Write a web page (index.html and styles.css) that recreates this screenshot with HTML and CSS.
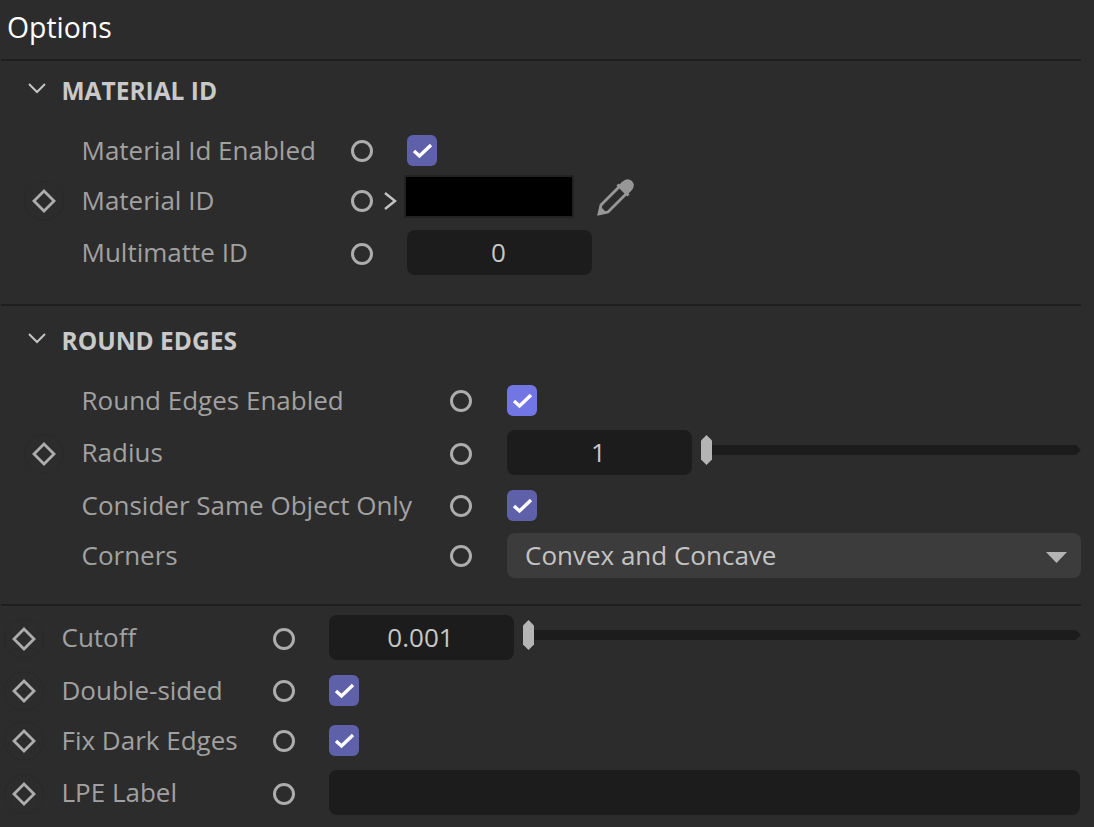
FILE: index.html
```html
<!DOCTYPE html>
<html lang="en">
<head>
<meta charset="utf-8">
<title>Options</title>
<link rel="stylesheet" href="styles.css">
</head>
<body>
<svg class="defs" width="0" height="0" aria-hidden="true">
  <defs>
    <symbol id="chev" viewBox="0 0 20 12"><path d="M2 2 L10 10 L18 2" fill="none" stroke="currentColor" stroke-width="2"/></symbol>
    <symbol id="tick" viewBox="0 0 30 30"><path d="M7 16 L12.500 21 L24 10" fill="none" stroke="#fff" stroke-width="3.400"/></symbol>
    <symbol id="diamond" viewBox="0 0 24 24"><path d="M12 2 L22 12 L12 22 L2 12 Z" fill="none" stroke="currentColor" stroke-width="2.800"/></symbol>
  </defs>
</svg>
<main class="panel">
  <h1 class="title">Options</h1>

  <section class="section sec-material">
    <h2 class="head"><svg class="chev"><use href="#chev"/></svg>MATERIAL ID</h2>
    <div class="row">
      <span class="key"></span><span class="label">Material Id Enabled</span><span class="dot"></span>
      <span class="check"><svg class="tick"><use href="#tick"/></svg></span>
    </div>
    <div class="row">
      <span class="key on"><svg class="dia"><use href="#diamond"/></svg></span><span class="label">Material ID</span><span class="dot"></span>
      <svg class="more" viewBox="0 0 14 20"><path d="M2 2 L12 10 L2 18" fill="none" stroke="currentColor" stroke-width="2.400"/></svg>
      <span class="swatch"></span>
      <svg class="dropper" viewBox="0 0 40 40"><path d="M26 7 L33 14 L12 35 L3 37 L5 28 Z" fill="none" stroke="#979797" stroke-width="2.800"/><path d="M3 37 L5 30 L10 35 Z" fill="#979797"/><path d="M23 10 L26 5 Q31 0 36 4 Q40 9 35 14 L30 17 Z" fill="#979797"/><path d="M21.500 7.500 L32.500 18.500" stroke="#979797" stroke-width="3"/></svg>
    </div>
    <div class="row tall">
      <span class="key"></span><span class="label">Multimatte ID</span><span class="dot"></span>
      <span class="num">0</span>
    </div>
  </section>

  <section class="section sec-round">
    <h2 class="head"><svg class="chev"><use href="#chev"/></svg>ROUND EDGES</h2>
    <div class="row">
      <span class="key"></span><span class="label">Round Edges Enabled</span><span class="dot"></span>
      <span class="check hot"><svg class="tick"><use href="#tick"/></svg></span>
    </div>
    <div class="row tall">
      <span class="key on"><svg class="dia"><use href="#diamond"/></svg></span><span class="label">Radius</span><span class="dot"></span>
      <span class="num">1</span>
      <span class="slider"><span class="thumb"></span><span class="track"></span></span>
    </div>
    <div class="row">
      <span class="key"></span><span class="label">Consider Same Object Only</span><span class="dot"></span>
      <span class="check"><svg class="tick"><use href="#tick"/></svg></span>
    </div>
    <div class="row">
      <span class="key"></span><span class="label">Corners</span><span class="dot"></span>
      <span class="select">Convex and Concave<span class="caret"></span></span>
    </div>
  </section>

  <section class="section sec-root">
    <div class="row tall">
      <span class="key on"><svg class="dia"><use href="#diamond"/></svg></span><span class="label">Cutoff</span><span class="dot"></span>
      <span class="num">0.001</span>
      <span class="slider"><span class="thumb"></span><span class="track"></span></span>
    </div>
    <div class="row">
      <span class="key on"><svg class="dia"><use href="#diamond"/></svg></span><span class="label">Double-sided</span><span class="dot"></span>
      <span class="check"><svg class="tick"><use href="#tick"/></svg></span>
    </div>
    <div class="row">
      <span class="key on"><svg class="dia"><use href="#diamond"/></svg></span><span class="label">Fix Dark Edges</span><span class="dot"></span>
      <span class="check"><svg class="tick"><use href="#tick"/></svg></span>
    </div>
    <div class="row tall">
      <span class="key on"><svg class="dia"><use href="#diamond"/></svg></span><span class="label">LPE Label</span><span class="dot"></span>
      <span class="text-field"></span>
    </div>
  </section>
</main>
</body>
</html>
```
FILE: styles.css
```css
* { box-sizing: border-box; }
html, body { margin: 0; height: 100%; }
body {
  background: #2c2c2c;
  font-family: "Open Sans", "Noto Sans", sans-serif;
  overflow: hidden;
}
.defs { position: absolute; }
.panel { width: 1081px; height: 827px; }
.title {
  margin: 0;
  height: 59px;
  padding: 7px 0 0 7px;
  font-size: 28.400px;
  line-height: 40px;
  font-weight: 400;
  color: #fff;
}
.section { border-top: 2px solid #1f1f1f; margin-left: 1px; }
.sec-material { --indent: 23px; --label: 269.500px; --gap: 34px; padding-bottom: 23px; }
.sec-round { --indent: 23px; --label: 368.500px; --gap: 35px; padding-top: 5px; padding-bottom: 23px; }
.sec-root { --indent: 3px; --label: 211.500px; --gap: 34px; padding-top: 5px; }
.head {
  display: flex;
  align-items: center;
  height: 60px;
  margin: 0 0 5px;
  padding-left: 26px;
  font-size: 24.500px;
  line-height: 30px;
  font-weight: 700;
  color: #c9c9c9;
}
.chev { width: 20px; height: 12px; margin: -6px 14.500px 0 0; color: #c4c4c4; }
.row {
  display: flex;
  align-items: center;
  height: 50px;
  padding-left: var(--indent);
}
.row.tall { height: 55px; }
.key {
  flex: none;
  display: flex;
  align-items: center;
  justify-content: center;
  width: 40px;
  height: 40px;
  margin-right: 17.500px;
  border-radius: 50%;
}
.key.on { border: 1px solid #292929; }
.dia { width: 24px; height: 24px; color: #adadad; }
.label {
  flex: none;
  width: var(--label);
  margin-bottom: 3px;
  font-size: 26px;
  line-height: 36px;
  color: #a1a1a1;
  white-space: nowrap;
}
.dot {
  flex: none;
  width: 22px;
  height: 22px;
  margin-right: var(--gap);
  border: 3px solid #adadad;
  border-radius: 50%;
}
.check {
  flex: none;
  display: block;
  width: 30px;
  height: 31px;
  margin-bottom: 1px;
  border-radius: 6px;
  background: #5e61a9;
}
.check.hot { background: #7275e4; }
.tick { display: block; width: 30px; height: 30px; }
.num {
  flex: none;
  width: 185px;
  height: 45px;
  margin-bottom: 2px;
  padding-right: 2px;
  border-radius: 8px;
  background: #1c1c1c;
  color: #c8c8c8;
  font-size: 26px;
  line-height: 45px;
  text-align: center;
}
.more { flex: none; width: 14px; height: 20px; margin: 0 7px 0 -24px; color: #c4c4c4; }
.swatch {
  flex: none;
  width: 170px;
  height: 43px;
  margin: -10px 0 0 0;
  background: #000;
  border: 2px solid #222;
}
.dropper { flex: none; width: 40px; height: 40px; margin: -8px 0 0 22px; }
.slider {
  position: relative;
  flex: 1;
  display: block;
  height: 30px;
  margin: -7px 0 0 9px;
}
.thumb {
  position: absolute;
  left: 0;
  top: 0;
  width: 11px;
  height: 30px;
  background: #b4b4b4;
  clip-path: polygon(50% 0, 100% 18%, 100% 82%, 50% 100%, 0 82%, 0 18%);
}
.track {
  position: absolute;
  left: 11px;
  right: 0;
  top: 10px;
  height: 10px;
  background: #1c1c1c;
  clip-path: polygon(0 0, calc(100% - 5px) 0, 100% 50%, calc(100% - 5px) 100%, 0 100%);
}
.select {
  position: relative;
  flex: 1;
  height: 45px;
  margin-bottom: 1px;
  padding-left: 18px;
  border-radius: 8px;
  background: #3c3c3c;
  color: #c4c4c4;
  font-size: 26px;
  line-height: 45px;
}
.caret {
  position: absolute;
  right: 14px;
  top: 19px;
  width: 21px;
  height: 11px;
  background: #b4b4b4;
  clip-path: polygon(0 0, 100% 0, 50% 100%);
}
.text-field {
  flex: 1;
  height: 45px;
  margin: 0 1px 2px 0;
  border-radius: 8px;
  background: #1c1c1c;
}
```
